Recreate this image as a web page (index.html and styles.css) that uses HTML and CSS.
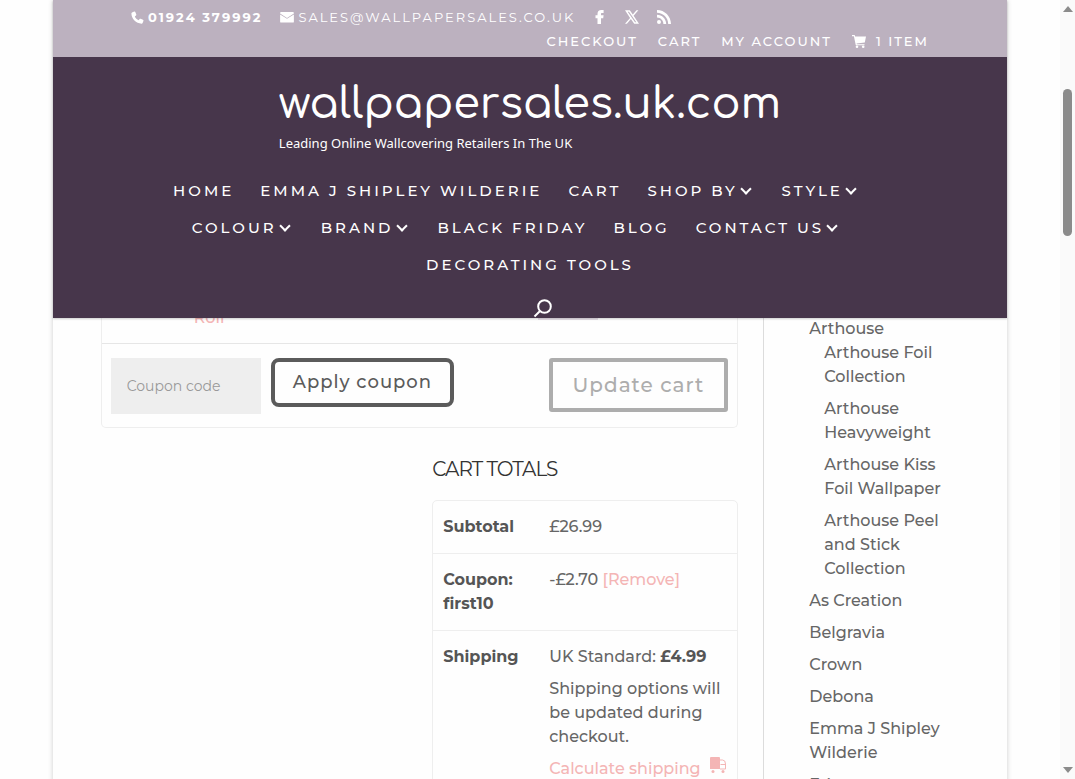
FILE: index.html
```
<!DOCTYPE html>
<html lang="en">
<head>
  <meta charset="UTF-8">
  <meta name="viewport" content="width=device-width, initial-scale=1">
  <title>Cart - Wallpaper Sales</title>
  <link rel="stylesheet" href="styles.css">
</head>
<body>

  <div class="viewport">
    <div class="page">

      <header>
        <div class="top-bar">
          <div class="contact">
            <a class="phone" href="tel:01924379992">
              <svg width="13" height="13" viewBox="0 0 13 13"><path d="M1 1.6 3.2.6c.5-.2.9 0 1.100.4l1 2.400c.1.4 0 .8-.3 1L3.800 5.400c.8 1.700 2.100 3 3.800 3.800l1-1.200c.3-.3.700-.4 1-.3l2.400 1c.4.200.600.600.500 1.100l-.9 2.200c-.2.500-.5.700-1 .7C5 12.500.5 8 .4 2.600c0-.5.2-.8.6-1z"/></svg>
              01924 379992</a>
            <a class="email" href="mailto:sales@wallpapersales.co.uk">
              <svg width="14" height="11" viewBox="0 0 15 12"><path d="M1 0h13q1 0 1 1v.7L7.500 6.500 0 1.700V1q0-1 1-1zM0 2.600 7.500 7.400 15 2.600V10.500q0 1-1 1H1q-1 0-1-1z"/></svg>
              SALES@WALLPAPERSALES.CO.UK</a>
            <a href="#" aria-label="Facebook">
              <svg width="14" height="14" viewBox="0 0 14 14"><path d="M4.500 14V8.200H2.500V5.300h2V4c0-2.700 1.300-4 3.900-4h2.200v3H9.200C8.200 3 8 3.300 8 4v1.300h2.600L10.200 8.200H8V14z"/></svg></a>
            <a href="#" aria-label="X">
              <svg width="14" height="14" viewBox="0 0 14 14"><path fill-rule="evenodd" d="M0 .3h4.800l3 4.200L11.500.3h1.900L8.600 5.700 14 13.700H9.200L5.900 9.100 1.900 13.700H0l5.100-5.800zM2.700 1.700l7.300 10.600h1.300L4 1.700z"/></svg></a>
            <a href="#" aria-label="RSS">
              <svg width="14" height="14" viewBox="0 0 14 14"><circle cx="2" cy="12" r="2"/><path d="M0 0c7.700 0 14 6.300 14 14h-2.800C11.200 7.800 6.200 2.800 0 2.800zM0 4.800c5 0 9.200 4.200 9.200 9.200H6.400C6.400 10.500 3.500 7.600 0 7.600z"/></svg></a>
          </div>
          <nav class="secondary">
            <a href="#">CHECKOUT</a>
            <a href="#">CART</a>
            <a href="#">MY ACCOUNT</a>
            <a class="basket" href="#">
              <svg width="14" height="13" viewBox="0 0 14 13"><path d="M0 0h2.700l.4 1.500H14L12.800 7.500 4.600 8.400l.2.900H12.500v1H3.800L1.900 1.200H0z"/><circle cx="5" cy="11.700" r="1.300"/><circle cx="11.200" cy="11.700" r="1.300"/></svg>
              1 ITEM</a>
          </nav>
        </div>

        <div class="main-header">
          <a class="logo" href="#">
            <span class="logo-name">wallpapersales.uk.com</span>
            <span class="tagline">Leading Online Wallcovering Retailers In The UK</span>
          </a>
          <nav class="menu">
            <div class="menu-row">
              <a href="#">HOME</a>
              <a href="#">EMMA J SHIPLEY WILDERIE</a>
              <a href="#">CART</a>
              <a class="has-sub" href="#">SHOP BY</a>
              <a class="has-sub" href="#">STYLE</a>
            </div>
            <div class="menu-row">
              <a class="has-sub" href="#">COLOUR</a>
              <a class="has-sub" href="#">BRAND</a>
              <a href="#">BLACK FRIDAY</a>
              <a href="#">BLOG</a>
              <a class="has-sub" href="#">CONTACT US</a>
            </div>
            <div class="menu-row last">
              <a href="#">DECORATING TOOLS</a>
            </div>
          </nav>
          <button class="search" aria-label="Search">
            <svg width="19" height="19" viewBox="0 0 19 19"><circle cx="11.500" cy="7.500" r="6.300"/><path d="M7 12 1.500 17.500"/></svg>
          </button>
        </div>
      </header>

      <div class="container">
        <main>
          <form class="cart">
            <div class="cart-item">
              <a class="link" href="#">Roll</a>
              <input class="qty" type="text" value="" aria-label="Quantity">
            </div>
            <div class="actions">
              <input class="coupon" type="text" placeholder="Coupon code" aria-label="Coupon code">
              <button class="apply" type="button">Apply coupon</button>
              <button class="update" type="button" disabled>Update cart</button>
            </div>
          </form>

          <section class="totals">
            <h2>CART TOTALS</h2>
            <table>
              <tr>
                <th>Subtotal</th>
                <td>£26.99</td>
              </tr>
              <tr>
                <th>Coupon: first10</th>
                <td>-£2.70 <a class="link" href="#">[Remove]</a></td>
              </tr>
              <tr>
                <th>Shipping</th>
                <td>
                  <p>UK Standard: <strong>£4.99</strong></p>
                  <p>Shipping options will be updated during checkout.</p>
                  <a class="link calculate" href="#">Calculate shipping
                    <svg width="18" height="16" viewBox="0 0 18 16"><path d="M2 0h8q1 0 1 1v11H1V1q0-1 1-1z"/><path class="outline" d="M11 3h2.500q3 0 3 4v5H11M11.500 7.500h5"/><circle cx="4" cy="14.500" r="1.500"/><circle cx="14" cy="14.500" r="1.500"/></svg></a>
                </td>
              </tr>
            </table>
          </section>
        </main>

        <aside>
          <ul>
            <li><a href="#">Arthouse</a>
              <ul>
                <li><a href="#">Arthouse Foil Collection</a></li>
                <li><a href="#">Arthouse Heavyweight</a></li>
                <li><a href="#">Arthouse Kiss Foil Wallpaper</a></li>
                <li><a href="#">Arthouse Peel and Stick Collection</a></li>
              </ul>
            </li>
            <li><a href="#">As Creation</a></li>
            <li><a href="#">Belgravia</a></li>
            <li><a href="#">Crown</a></li>
            <li><a href="#">Debona</a></li>
            <li><a href="#">Emma J Shipley Wilderie</a></li>
            <li><a href="#">Erismann</a></li>
          </ul>
        </aside>
      </div>

    </div>
  </div>

  <div class="scrollbar">
    <span class="arrow-up"></span>
    <span class="thumb"></span>
    <span class="arrow-down"></span>
  </div>

</body>
</html>
```
FILE: styles.css
```
* {
  box-sizing: border-box;
}

body {
  margin: 0;
  height: 100vh;
  display: flex;
  overflow: hidden;
  background: #fefefe;
  color: #666;
  font-family: Montserrat, Inter, sans-serif;
  font-size: 16px;
  font-weight: 500;
  line-height: 24px;
}

a {
  color: inherit;
  text-decoration: none;
}

ul, p, h2 {
  margin: 0;
  padding: 0;
}

.viewport {
  flex: 1;
  overflow: hidden;
}

.page {
  width: 90%;
  min-height: 100%;
  margin: 0 auto;
  box-shadow: 0 0 5px rgba(0, 0, 0, 0.2);
}

/* header stays above the scrolled cart */
header {
  position: relative;
  z-index: 2;
  color: #fff;
  box-shadow: 0 1px 2px rgba(0, 0, 0, 0.2);
}

header svg {
  fill: currentColor;
}

.top-bar {
  background: #bcb1bf;
  padding: 5px 78px 4px;
  font-size: 13px;
  letter-spacing: 2px;
}

.contact, .secondary {
  display: flex;
  align-items: center;
}

.contact a, .secondary a {
  display: flex;
  align-items: center;
  gap: 4px;
}

.contact {
  gap: 18px;
}

.phone {
  font-weight: 700;
}

.email {
  font-weight: 400;
}

.secondary {
  justify-content: flex-end;
  gap: 20px;
}

.secondary .basket {
  gap: 10px;
}

.main-header {
  background: #47364b;
  padding-top: 20px;
}

.logo {
  display: block;
  width: fit-content;
  margin: 0 auto;
}

.logo-name {
  display: block;
  font-family: Comfortaa, Quicksand, Lato, sans-serif;
  font-size: 43px;
  font-weight: 500;
  line-height: 54px;
}

.tagline {
  display: block;
  font-family: "Noto Sans", sans-serif;
  font-size: 13px;
  font-weight: 400;
  line-height: 24px;
}

.menu {
  padding-top: 17px;
  font-size: 15px;
  letter-spacing: 3px;
}

.menu-row {
  display: flex;
  flex-wrap: wrap;
  justify-content: center;
  line-height: 37px;
}

.menu-row a {
  padding-right: 26px;
}

.menu-row.last a {
  padding-right: 0;
}

.has-sub::after {
  content: "";
  display: inline-block;
  width: 6px;
  height: 6px;
  margin: 0 6px 3px 4px;
  border: solid #fff;
  border-width: 0 2px 2px 0;
  transform: rotate(45deg);
}

.search {
  display: block;
  margin: 0 auto;
  padding: 16px 0 0 24px;
  border: 0;
  background: none;
  color: #fff;
}

.search svg {
  display: block;
  fill: none;
  stroke: #fff;
  stroke-width: 2;
}

.container {
  width: 90%;
  margin: -20px auto 0;
  display: flex;
}

main {
  flex: 1;
}

.link {
  color: #f4b5b5;
}

.cart {
  border: 1px solid #eee;
  border-top: 0;
  border-radius: 0 0 5px 5px;
}

.cart-item {
  display: flex;
  justify-content: space-between;
  height: 45px;
  padding: 8px 139px 0 92px;
}

.qty {
  width: 60px;
  height: 14px;
  border: 0;
  background: #e8e2e9;
}

.actions {
  display: flex;
  align-items: flex-start;
  gap: 10px;
  padding: 14px 9px 13px;
  border-top: 1px solid #e6e6e6;
}

.coupon {
  width: 150px;
  height: 56px;
  padding: 0 16px;
  border: 0;
  background: #eee;
  font: inherit;
  font-size: 14px;
  font-weight: 400;
}

.coupon::placeholder {
  color: #999;
}

.actions button {
  padding: 0 18px;
  background: none;
  border: 4px solid #5b5b5b;
  border-radius: 8px;
  color: #5b5b5b;
  font: inherit;
  font-size: 18px;
  line-height: 41px;
  letter-spacing: 1px;
}

.actions .update {
  margin-left: auto;
  padding: 0 20px;
  border-color: #adadad;
  border-radius: 3px;
  color: #adadad;
  font-size: 20px;
  line-height: 46px;
}

.totals {
  width: 48%;
  margin: 29px 0 0 auto;
}

.totals h2 {
  margin-bottom: 19px;
  color: #333;
  font-size: 20px;
  font-weight: 400;
  letter-spacing: -1px;
}

table {
  width: 100%;
  border: 1px solid #eee;
  border-radius: 5px;
  border-spacing: 0;
}

th, td {
  padding: 14px 10px;
  vertical-align: top;
  text-align: left;
}

tr + tr th, tr + tr td {
  border-top: 1px solid #eee;
}

th {
  width: 106px;
  color: #555;
  font-weight: 700;
}

td p {
  margin-bottom: 8px;
}

td strong {
  color: #555;
}

.calculate {
  display: flex;
  justify-content: space-between;
  white-space: nowrap;
}

.calculate svg {
  fill: currentColor;
}

.calculate .outline {
  fill: none;
  stroke: currentColor;
}

aside {
  width: 196px;
  margin-left: 25px;
  padding: 19px 0 0 45px;
  border-left: 1px solid #dcdcdc;
}

aside ul {
  list-style: none;
}

aside li {
  margin-bottom: 8px;
}

aside ul ul {
  padding-left: 15px;
}

.scrollbar {
  display: flex;
  flex-direction: column;
  align-items: center;
  width: 15px;
  padding: 6px 0;
  background: #fafafa;
}

.thumb {
  width: 9px;
  height: 147px;
  margin-top: 77px;
  border-radius: 5px;
  background: #8b8b8b;
}

.arrow-up, .arrow-down {
  border: solid transparent;
  border-width: 0 5px;
}

.arrow-up {
  border-bottom: 6px solid #8b8b8b;
}

.arrow-down {
  margin-top: auto;
  border-top: 6px solid #8b8b8b;
}
```
